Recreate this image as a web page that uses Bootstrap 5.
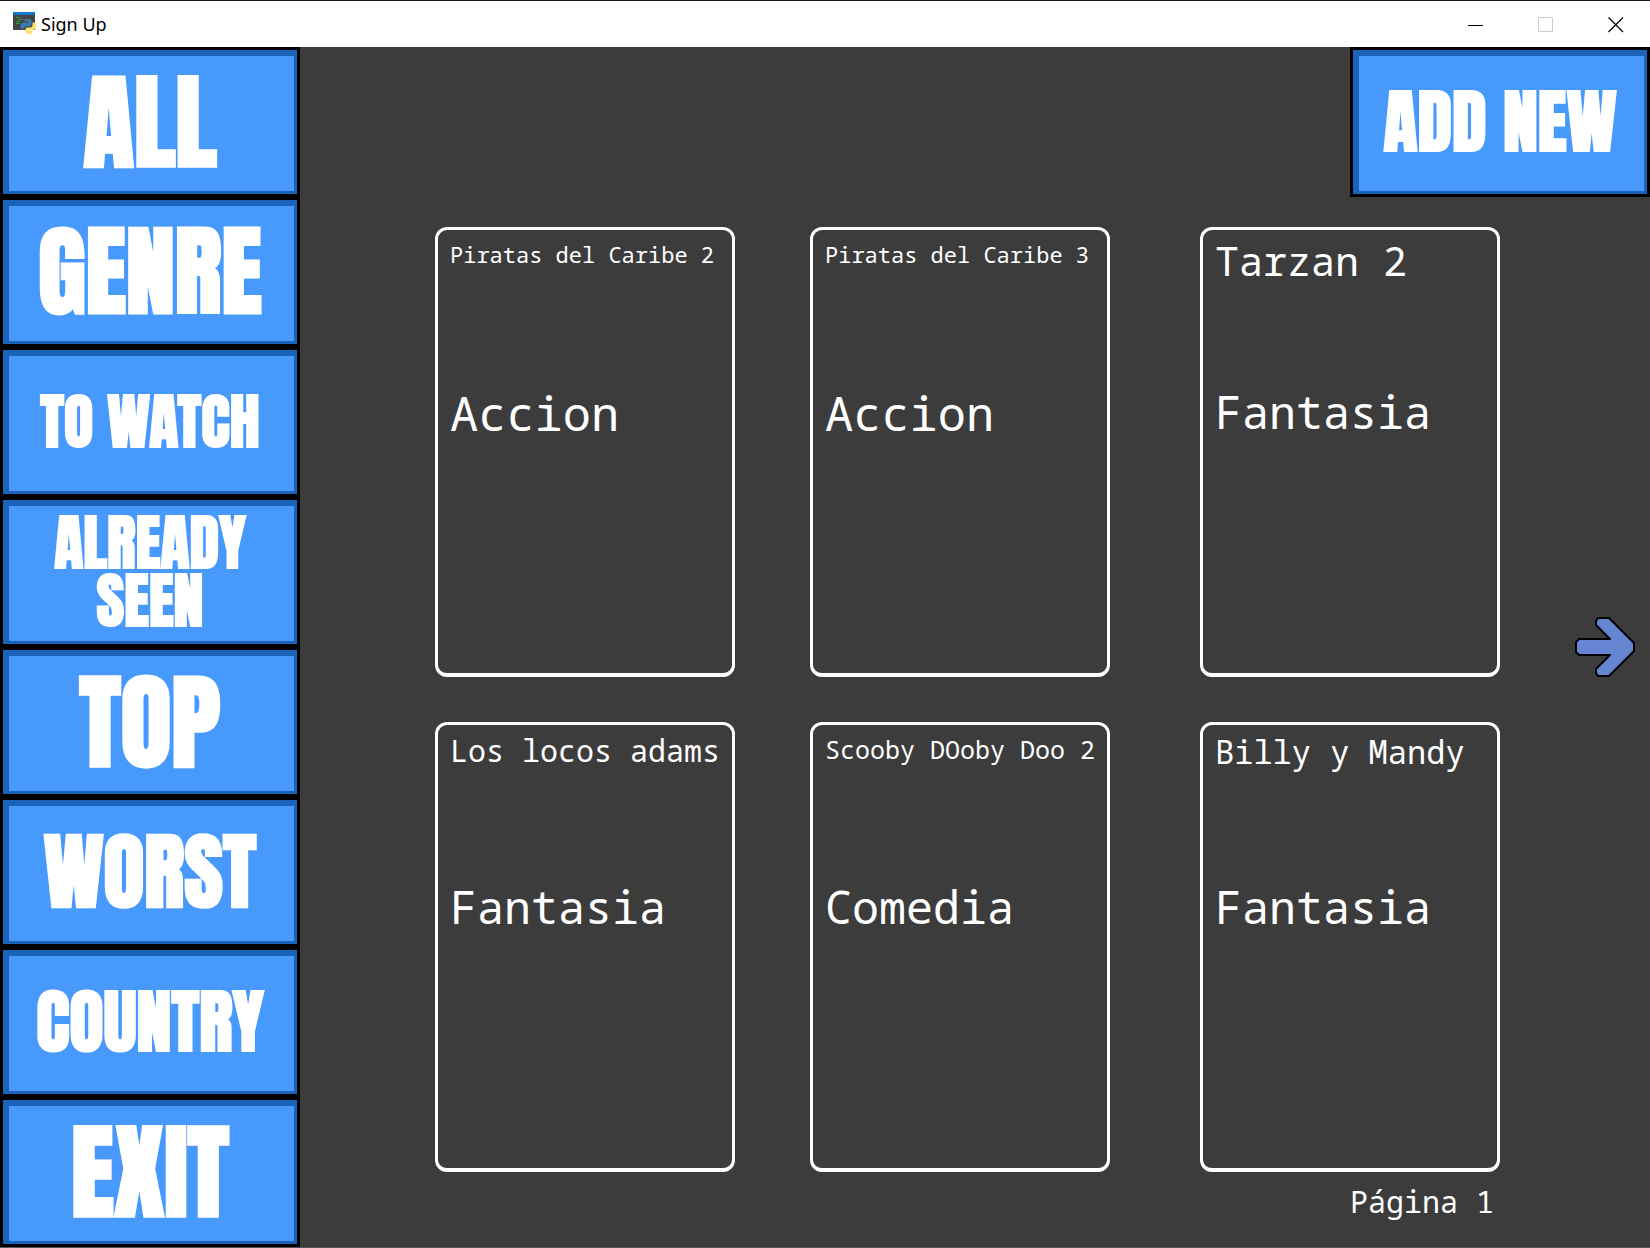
<!DOCTYPE html>
<html lang="es">
<head>
<meta charset="utf-8">
<meta name="viewport" content="width=device-width, initial-scale=1">
<title>Sign Up</title>
<link href="https://cdn.jsdelivr.net/npm/bootstrap@5.3.0/dist/css/bootstrap.min.css" rel="stylesheet">
<style>
  body { background: #3c3c3c; color: #fff; font-family: "Noto Sans Mono", "DejaVu Sans Mono", monospace; }
  .app-window { border-top: 1px solid #1e1a1e; border-bottom: 1px solid #555; }
  .title-bar { height: 46px; background: #fff; color: #000; font: 18px/24px "Noto Sans", sans-serif; }
  .win-ctl { width: 70px; height: 46px; border: 0; background: transparent; padding: 0 0 3px 1px; }
  .side-nav { width: 300px; }
  .tile {
    width: 300px; height: 150px; padding: 0; color: #fff; background: #4799fb;
    border: 3px solid #000; border-radius: 0;
    box-shadow: inset 6px 6px 0 #1a63b8, inset -3px -3px 0 #1a63b8;
    font-family: Impact, Anton, sans-serif; font-weight: 700; line-height: 1; white-space: nowrap;
  }
  .tile:hover { filter: brightness(1.08); }
  .tile-xl { font-size: 104px; }
  .tile-lg { font-size: 98px; }
  .tile-md { font-size: 84px; }
  .tile-sm { font-size: 70px; }
  .tile-xs { font-size: 60px; line-height: 58px; }
  .shelf { padding: 30px 0 0 135px; gap: 45px; }
  .shelf-row { gap: 75px; }
  .movie {
    flex: 1 1 0; min-width: 0; height: 450px; padding: 8px 12px;
    border: 3px solid #fff; border-bottom-width: 4px; border-radius: 12px; white-space: nowrap;
  }
  .movie:last-child { margin-left: 15px; }
  .movie-name { height: 148px; margin: 0; font-weight: 400; line-height: 1.17; }
  .movie-kind { margin: 0; line-height: 1.17; }
  .t22 { font-size: 22px; } .t25 { font-size: 25px; } .t30 { font-size: 30px; }
  .t32 { font-size: 32px; } .t40 { font-size: 40px; } .t45 { font-size: 45px; } .t47 { font-size: 47px; }
  .movie-name.t22, .movie-name.t25 { line-height: 32px; }
  .pager { width: 150px; padding: 0 0 75px 60px; }
  .page-label { padding-right: 156px; line-height: 35px; margin-top: 12px; }
</style>
</head>
<body>
<div class="app-window min-vh-100 d-flex flex-column">
  <header class="title-bar d-flex align-items-center">
    <svg class="ms-2" width="33" height="24" viewBox="0 0 33 24" aria-hidden="true">
      <path d="M5 0h22v18H5z" fill="#454545"/><path d="M5 0h22v3H5z" fill="#0a78cc"/>
      <path d="M8 5.500h4M10 7.500h5M8 9.500h4M8 11.500h4" stroke="#2f9a3a" stroke-width="1.200"/>
      <path d="M17.500 7h4q2 0 2 2v3.500q0 2-2 2h-3.500q-2 0-2 2.500h-1q-2.500 0-2.500-3t3-3.500h5v-1h-4V9q0-2 1-2z" fill="#3b79b0"/>
      <path d="M24.500 10.500h1q2.500 0 2.500 3.500t-3 4h-3.500v1h3v1q0 2-3 2t-4-2v-2.500q0-2 2-2h3q2 0 2-2.500z" fill="#ffe060"/>
    </svg>
    <span class="me-auto">Sign Up</span>
    <button class="win-ctl" type="button" aria-label="Minimizar"><svg width="16" height="16" viewBox="0 0 16 16"><path d="M0 8.500h15" stroke="#000"/></svg></button>
    <button class="win-ctl" type="button" aria-label="Maximizar" disabled><svg width="16" height="16" viewBox="0 0 16 16"><path d="M.5.5h14v14H.5z" fill="none" stroke="#ccc"/></svg></button>
    <button class="win-ctl" type="button" aria-label="Cerrar"><svg width="16" height="16" viewBox="0 0 16 16"><path d="M.5.5l14.500 14.500M15 .5L.5 15" stroke="#000" stroke-width="1.200"/></svg></button>
  </header>

  <div class="d-flex flex-grow-1">
    <nav class="side-nav flex-shrink-0 d-flex flex-column">
      <button class="tile tile-xl" type="button">ALL</button>
      <button class="tile tile-lg" type="button">GENRE</button>
      <button class="tile tile-xs" type="button">TO WATCH</button>
      <button class="tile tile-xs" type="button">ALREADY<br>SEEN</button>
      <button class="tile tile-xl" type="button">TOP</button>
      <button class="tile tile-md" type="button">WORST</button>
      <button class="tile tile-sm" type="button">COUNTRY</button>
      <button class="tile tile-xl" type="button">EXIT</button>
    </nav>

    <main class="flex-grow-1 d-flex flex-column">
      <div class="d-flex justify-content-end">
        <button class="tile tile-sm" type="button">ADD NEW</button>
      </div>
      <div class="d-flex">
        <section class="shelf flex-grow-1 d-flex flex-column">
          <div class="shelf-row d-flex">
            <article class="movie"><h2 class="movie-name t22">Piratas del Caribe 2</h2><p class="movie-kind t47">Accion</p></article>
            <article class="movie"><h2 class="movie-name t22">Piratas del Caribe 3</h2><p class="movie-kind t47">Accion</p></article>
            <article class="movie"><h2 class="movie-name t40">Tarzan 2</h2><p class="movie-kind t45">Fantasia</p></article>
          </div>
          <div class="shelf-row d-flex">
            <article class="movie"><h2 class="movie-name t30">Los locos adams</h2><p class="movie-kind t45">Fantasia</p></article>
            <article class="movie"><h2 class="movie-name t25">Scooby DOoby Doo 2</h2><p class="movie-kind t45">Comedia</p></article>
            <article class="movie"><h2 class="movie-name t32">Billy y Mandy</h2><p class="movie-kind t45">Fantasia</p></article>
          </div>
        </section>
        <aside class="pager flex-shrink-0 d-flex align-items-center justify-content-center">
          <button class="btn p-0 border-0" type="button" aria-label="Página siguiente">
            <svg class="d-block" width="60" height="60" viewBox="0 0 60 60">
              <path d="M23 1h11l25 25v8L34 59H23l-2-3v-4l14-14H4l-3-3V25l3-3h31L21 8V4z" fill="#6585d3" stroke="#000" stroke-width="2" stroke-linejoin="round"/>
            </svg>
          </button>
        </aside>
      </div>
      <footer class="page-label t30 text-end">Página 1</footer>
    </main>
  </div>
</div>
<script src="https://cdn.jsdelivr.net/npm/bootstrap@5.3.0/dist/js/bootstrap.bundle.min.js"></script>
</body>
</html>
